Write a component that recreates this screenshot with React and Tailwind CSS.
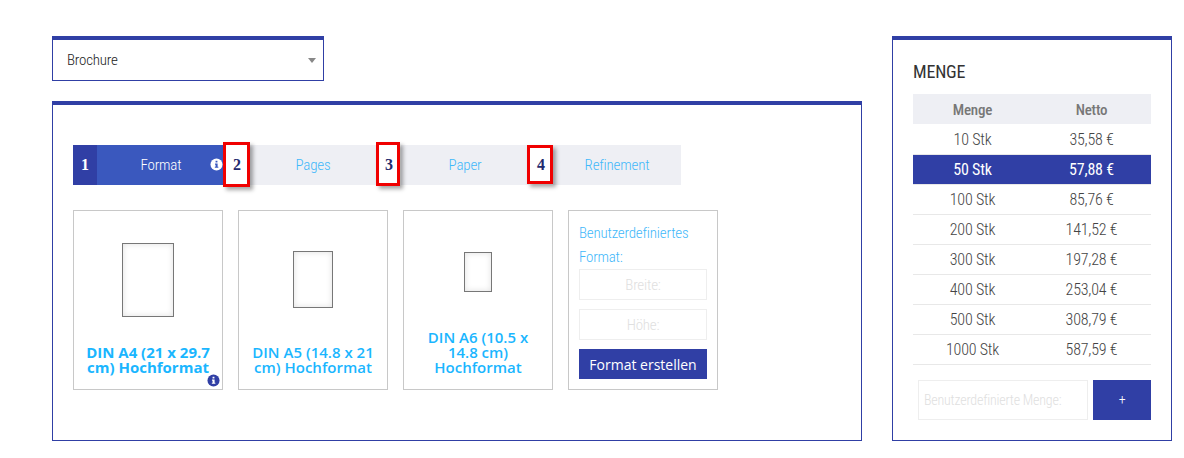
import React from 'react';

const narrow = "font-['Roboto',sans-serif] font-stretch-[80%] font-light tracking-[-0.2px]";

const tabs = [
    { num: "1", label: "Format", active: true },
    { num: "2", label: "Pages", mark: "left-[-2px] top-[-3px] w-[27px] h-[45px]" },
    { num: "3", label: "Paper", mark: "left-[-1px] top-[-3px] w-[24px] h-[44px]" },
    { num: "4", label: "Refinement", mark: "left-[-2px] top-0 w-[26px] h-[39px]" },
];

const prices = [
    ["10 Stk", "35,58 €"],
    ["50 Stk", "57,88 €"],
    ["100 Stk", "85,76 €"],
    ["200 Stk", "141,52 €"],
    ["300 Stk", "197,28 €"],
    ["400 Stk", "253,04 €"],
    ["500 Stk", "308,79 €"],
    ["1000 Stk", "587,59 €"],
];

const InfoIcon = ({ className, glyph = "#fff" }) => (
    <svg viewBox="0 0 14 14" className={className}>
        <circle cx="7" cy="7" r="6.5" fill="currentColor" />
        <rect x="6" y="3" width="2" height="1.8" fill={glyph} />
        <path d="M5.4 6h2.8v3.4h.8v1.2H5.2V9.4H6V7.2h-.6z" fill={glyph} />
    </svg>
);

const Tab = ({ tab }) => (
    <div className={`flex w-[152px] h-10 ${tab.active ? "bg-[#3a58be]" : "bg-[#eeeff4]"}`}>
        <div className={`relative w-6 flex items-center justify-center font-['Liberation_Serif',serif] font-bold text-[16px] ${tab.active ? "bg-[#303fa5] text-white" : "bg-white text-[#1f2a6e]"}`}>
            {tab.num}
            {tab.mark && (
                <span className={`absolute border-[3px] border-[#f00000] shadow-[3px_3px_4px_rgba(0,0,0,0.35)] ${tab.mark}`} />
            )}
        </div>
        <div className={`relative flex-1 flex items-center justify-center text-[15px] ${narrow} ${tab.active ? "text-white" : "text-[#3fb8fa]"}`}>
            {tab.label}
            {tab.active && <InfoIcon glyph="#3a58be" className="absolute right-[2px] top-[13px] w-[13px] h-[13px] text-white" />}
        </div>
    </div>
);

const FormatCard = ({ label, paper, bold, info }) => (
    <div className="relative w-[150px] h-[180px] border border-[#c8c8c8] flex flex-col items-center pb-[14px] px-[10px]">
        <div className="flex-1 flex items-start justify-center">
            <div className={`border border-[#777] bg-white shadow-[inset_0_0_6px_rgba(0,0,0,0.12)] ${paper}`} />
        </div>
        <p className={`text-center text-[15px] leading-[15px] text-[#1ab6ff] font-['Open_Sans',sans-serif] ${bold ? "font-bold" : "font-semibold"}`}>
            {label}
        </p>
        {info && <InfoIcon className="absolute right-[2px] bottom-[2px] w-[13px] h-[13px] text-[#303fa5]" />}
    </div>
);

const App = () => {
    return (
        <div className="w-[1184px] h-[458px] bg-white flex items-start pt-9 pl-[52px] overflow-hidden">
            <div className="w-[810px]">
                <div className={`relative w-[272px] h-[45px] border border-[#303fa5] border-t-4 flex items-center pl-[14px] text-[15px] text-[#222] ${narrow}`}>
                    Brochure
                    <span className="absolute right-[7px] top-[18px] w-0 h-0 border-x-4 border-x-transparent border-t-[5px] border-t-[#888]" />
                </div>

                <div className="mt-5 h-[340px] border border-[#303fa5] border-t-4 pt-10 pl-5">
                    <div className="flex">
                        {tabs.map((t) => <Tab key={t.num} tab={t} />)}
                    </div>

                    <div className="mt-[25px] flex gap-[15px]">
                        <FormatCard label="DIN A4 (21 x 29.7 cm) Hochformat" bold info paper="w-[52px] h-[74px] mt-8" />
                        <FormatCard label="DIN A5 (14.8 x 21 cm) Hochformat" paper="w-10 h-[57px] mt-10" />
                        <FormatCard label="DIN A6 (10.5 x 14.8 cm) Hochformat" paper="w-7 h-10 mt-[41px]" />

                        <div className={`w-[150px] h-[180px] border border-[#c8c8c8] px-[10px] pt-[10px] ${narrow}`}>
                            <p className="text-[15px] leading-6 text-[#3fb8fa]">Benutzerdefiniertes Format:</p>
                            <input
                                placeholder="Breite:"
                                className="block w-full h-[31px] mt-0 border border-[#eeeeee] text-center text-[15px] placeholder:text-[#e0e0e0] outline-none"
                            />
                            <input
                                placeholder="Höhe:"
                                className="block w-full h-[31px] mt-[9px] border border-[#eeeeee] text-center text-[15px] placeholder:text-[#e0e0e0] outline-none"
                            />
                            <button className="block w-full h-[30px] mt-[9px] bg-[#303fa5] text-white text-[14px] font-normal tracking-normal font-stretch-normal font-['Open_Sans',sans-serif]">
                                Format erstellen
                            </button>
                        </div>
                    </div>
                </div>
            </div>

            <div className={`ml-[30px] w-[280px] h-[405px] border border-[#303fa5] border-t-4 pt-5 px-5 ${narrow}`}>
                <h2 className="text-[18px] leading-6 font-normal font-stretch-[75%] text-[#333]">MENGE</h2>
                <table className="mt-[10px] w-[238px] table-fixed text-[16px] text-center text-[#444]">
                    <thead>
                        <tr className="h-[30px] bg-[#eeeff4] text-[#777] text-[15px]">
                            <th className="font-medium pt-[2px]">Menge</th>
                            <th className="font-medium pt-[2px]">Netto</th>
                        </tr>
                    </thead>
                    <tbody>
                        {prices.map(([qty, price]) => (
                            <tr
                                key={qty}
                                className={`h-[30px] border-b border-[#e8e8e8] ${qty === "50 Stk" ? "bg-[#303fa5] text-white font-normal" : ""}`}
                            >
                                <td className="pt-[2px]">{qty}</td>
                                <td className="pt-[2px]">{price}</td>
                            </tr>
                        ))}
                    </tbody>
                </table>
                <div className="mt-[15px] ml-[5px] flex gap-[5px]">
                    <input
                        placeholder="Benutzerdefinierte Menge:"
                        className="w-[170px] h-10 border border-[#eeeeee] px-[5px] text-[14px] placeholder:text-[#e0e0e0] outline-none"
                    />
                    <button className="w-[58px] h-10 bg-[#303fa5] text-white text-[14px]">+</button>
                </div>
            </div>
        </div>
    );
};

export default App;
